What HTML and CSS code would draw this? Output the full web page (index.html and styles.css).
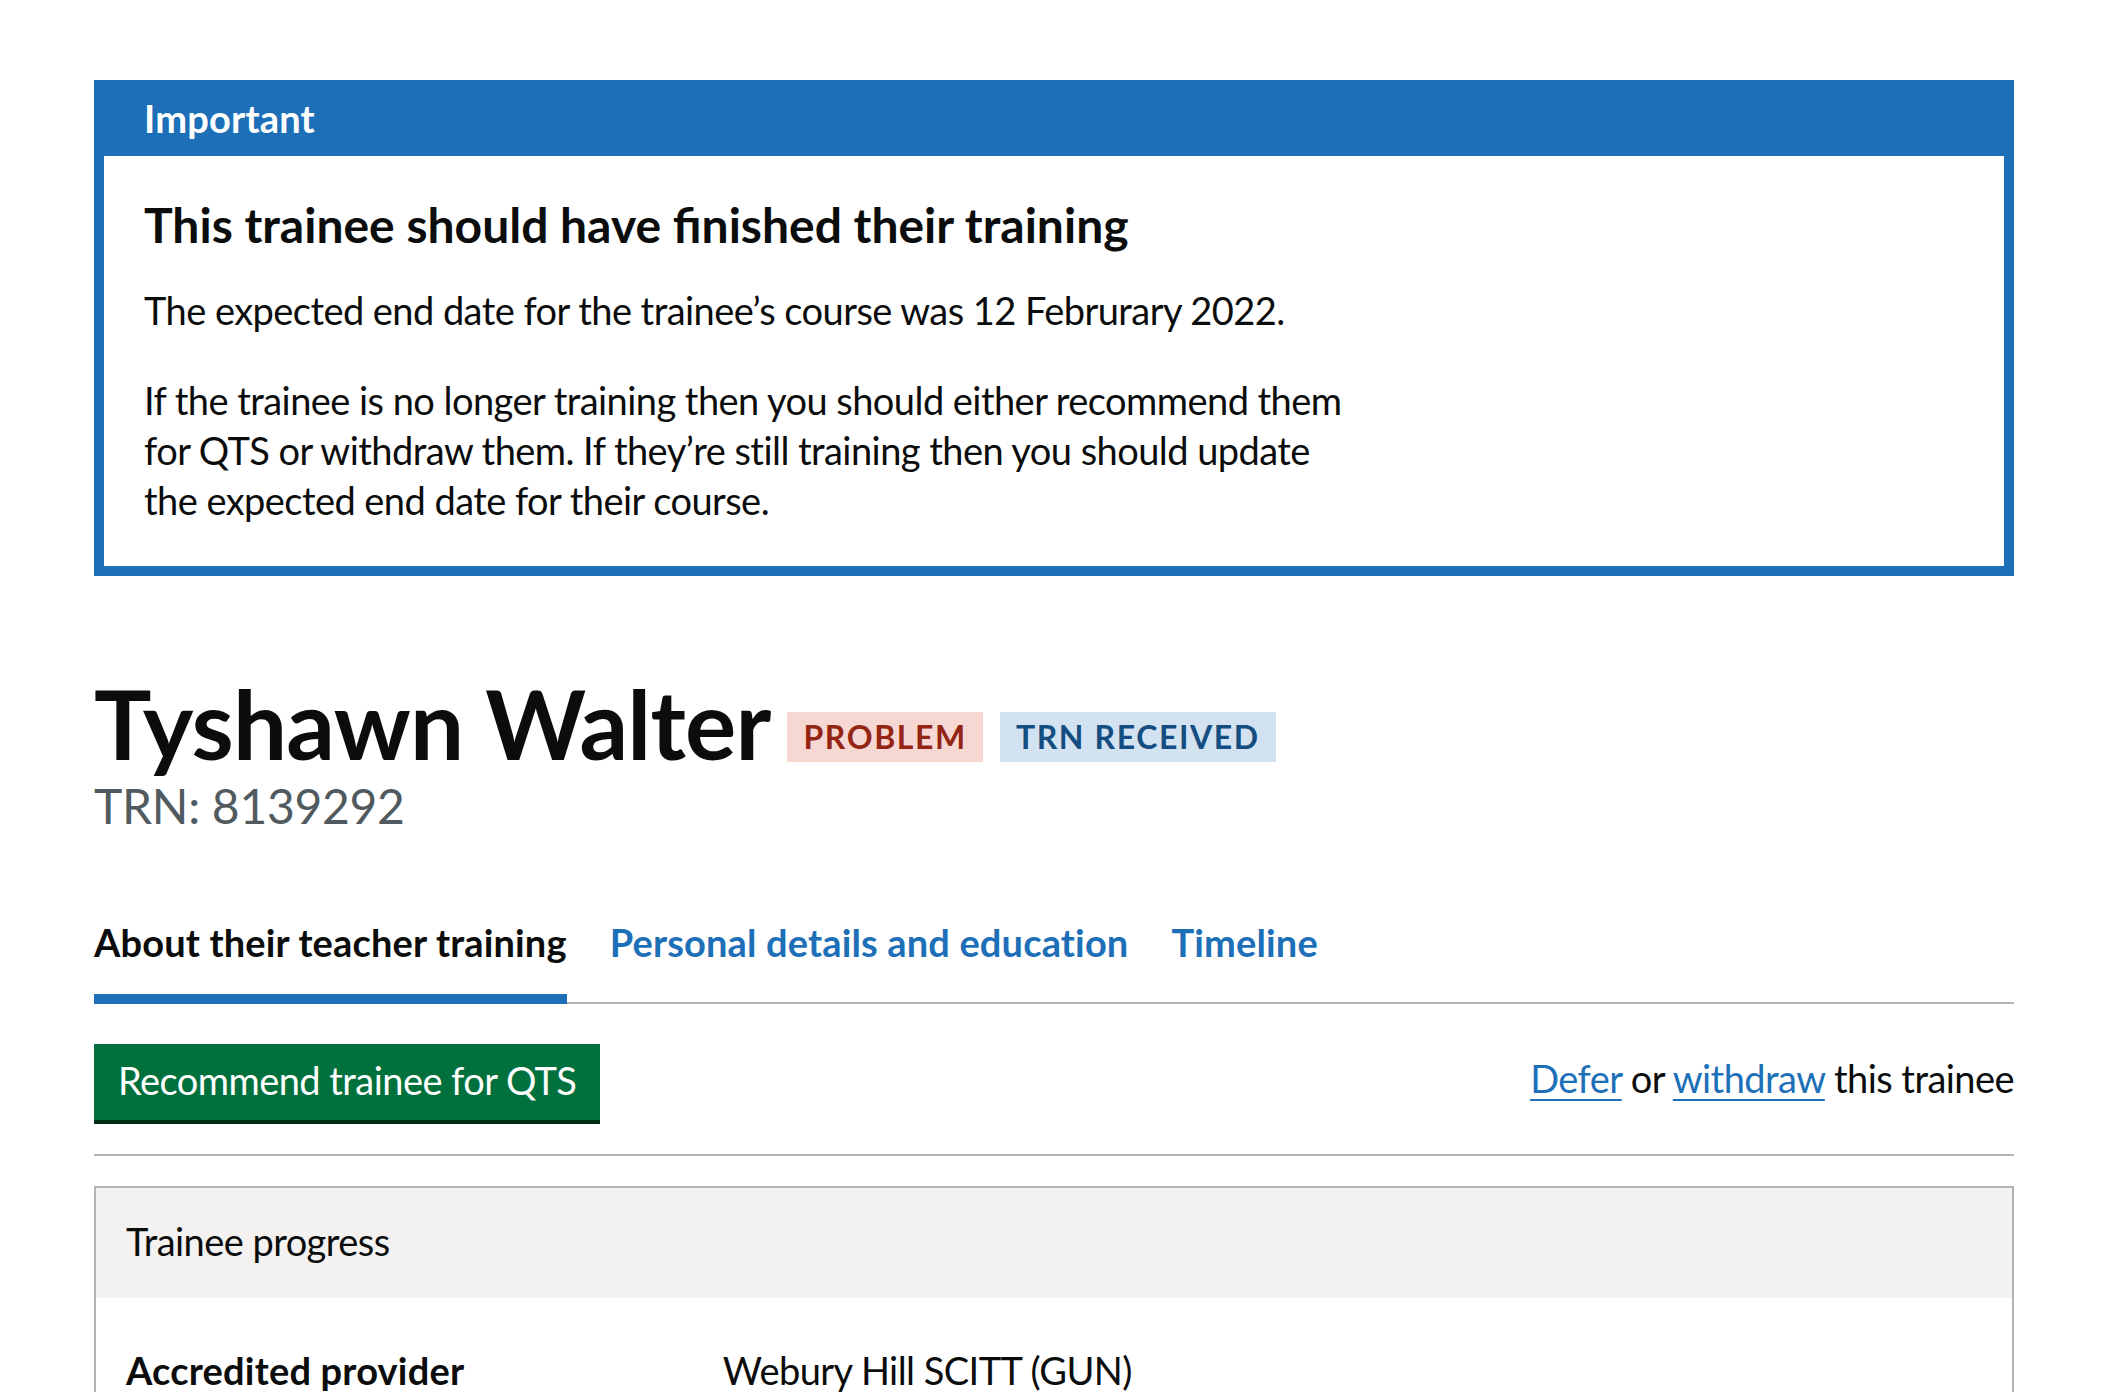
FILE: index.html
```html
<!DOCTYPE html>
<html lang="en">
<head>
<meta charset="utf-8">
<title>Tyshawn Walter - Register trainee teachers</title>
<link rel="stylesheet" href="styles.css">
</head>
<body>
<div class="page">
  <main class="container">
    <div class="banner" role="region" aria-labelledby="banner-title">
      <div class="banner-header">
        <h2 class="banner-title" id="banner-title">Important</h2>
      </div>
      <div class="banner-content">
        <h3 class="banner-heading">This trainee should have finished their training</h3>
        <p class="body-text">The expected end date for the trainee’s course was 12 Februrary 2022.</p>
        <p class="body-text">If the trainee is no longer training then you should either recommend them for QTS or withdraw them. If they’re still training then you should update the expected end date for their course.</p>
      </div>
    </div>

    <h1 class="name-heading">
      <span class="name">Tyshawn Walter</span>
      <strong class="tag tag-red">Problem</strong>
      <strong class="tag tag-blue">TRN received</strong>
    </h1>
    <p class="caption">TRN: 8139292</p>

    <nav class="tabs" aria-label="Trainee record">
      <ul class="tabs-list">
        <li class="tabs-item tabs-item-current"><a class="tabs-link tabs-link-current" href="#" aria-current="page">About their teacher training</a></li>
        <li class="tabs-item"><a class="tabs-link" href="#">Personal details and education</a></li>
        <li class="tabs-item"><a class="tabs-link" href="#">Timeline</a></li>
      </ul>
    </nav>

    <div class="record-actions">
      <a class="button" href="#" role="button">Recommend trainee for QTS</a>
      <p class="record-links"><a class="link" href="#">Defer</a> or <a class="link" href="#">withdraw</a> this trainee</p>
    </div>

    <section class="card">
      <div class="card-header">
        <h2 class="card-title">Trainee progress</h2>
      </div>
      <div class="card-content">
        <dl class="summary-list">
          <div class="summary-row">
            <dt class="summary-key">Accredited provider</dt>
            <dd class="summary-value">Webury Hill SCITT (GUN)</dd>
          </div>
        </dl>
      </div>
    </section>
  </main>
</div>
</body>
</html>
```
FILE: styles.css
```css
html, body {
  margin: 0;
  padding: 0;
  background: #ffffff;
}

body {
  font-family: Lato, "Liberation Sans", Arial, sans-serif;
  color: #0b0c0c;
  -webkit-font-smoothing: antialiased;
}

.page {
  padding: 80px 0 0 94px;
}

.container {
  width: 1920px;
}

/* Notification banner */
.banner {
  border: 10px solid #1d70b8;
  background: #1d70b8;
  margin-bottom: 97px;
}

.banner-header {
  padding: 3px 40px 11px;
  border-bottom: 2px solid transparent;
}

.banner-title {
  margin: 0;
  font-size: 38px;
  line-height: 50px;
  font-weight: 700;
  color: #ffffff;
  letter-spacing: 0.2px;
}

.banner-content {
  background: #ffffff;
  padding: 39px 40px 41px;
}

.banner-heading {
  margin: 0 0 30px;
  font-size: 48px;
  line-height: 60px;
  font-weight: 700;
  max-width: 1210px;
}

.body-text {
  margin: 0 0 40px;
  font-size: 38px;
  line-height: 50px;
  letter-spacing: -0.55px;
  max-width: 1210px;
}

.body-text:last-child {
  margin-bottom: 0;
}

/* Heading */
.name-heading {
  display: flex;
  align-items: flex-start;
  margin: 0 0 3px;
  font-size: 96px;
  line-height: 100px;
  font-weight: 700;
}

.name {
  letter-spacing: -0.8px;
  margin-right: 17px;
}

.tag {
  display: inline-block;
  margin-top: 39px;
  margin-right: 17px;
  padding: 9px 16px 9px;
  font-size: 32px;
  line-height: 32px;
  font-weight: 700;
  text-transform: uppercase;
  letter-spacing: 1.6px;
}

.tag-red {
  background: #f6d7d2;
  color: #942514;
}

.tag-blue {
  background: #d2e2f1;
  color: #144e81;
}

.caption {
  margin: 0 0 81px;
  font-size: 48px;
  line-height: 60px;
  color: #505a5f;
  letter-spacing: -0.3px;
}

/* Tabs */
.tabs-list {
  display: flex;
  margin: 0;
  padding: 0;
  list-style: none;
  border-bottom: 2px solid #b1b4b6;
}

.tabs-item {
  margin: 0 43px -2px 0;
  padding-bottom: 27px;
}

.tabs-item-current {
  border-bottom: 10px solid #1d70b8;
}

.tabs-link {
  display: block;
  font-size: 38px;
  line-height: 50px;
  font-weight: 700;
  letter-spacing: 0.15px;
  color: #1d70b8;
  text-decoration: none;
}

.tabs-link-current {
  color: #0b0c0c;
}

/* Actions row */
.record-actions {
  display: flex;
  justify-content: space-between;
  align-items: center;
  margin-top: 40px;
  padding-bottom: 34px;
  border-bottom: 2px solid #b1b4b6;
}

.button {
  display: inline-block;
  padding: 13px 20px 17px;
  border: 4px solid transparent;
  background: #00703c;
  box-shadow: 0 4px 0 #002d18;
  color: #ffffff;
  font-size: 38px;
  line-height: 38px;
  letter-spacing: -0.55px;
  text-decoration: none;
}

.record-links {
  margin: 0 0 8px;
  font-size: 38px;
  line-height: 50px;
  letter-spacing: -0.55px;
}

.link {
  color: #1d70b8;
  text-decoration: underline;
  text-decoration-thickness: 2px;
  text-underline-offset: 6px;
}

/* Summary card */
.card {
  margin-top: 30px;
  border: 2px solid #b1b4b6;
}

.card-header {
  background: #f3f2f1;
  padding: 28px 30px 32px;
}

.card-title {
  margin: 0;
  font-size: 38px;
  line-height: 50px;
  font-weight: 400;
  letter-spacing: -0.55px;
}

.card-content {
  padding: 27px 30px 30px;
}

.summary-list {
  margin: 0;
}

.summary-row {
  display: grid;
  grid-template-columns: calc(30% + 40px) 1fr;
  border-bottom: 2px solid #b1b4b6;
}

.summary-key {
  padding: 20px 40px 20px 0;
  font-size: 38px;
  line-height: 50px;
  font-weight: 700;
  letter-spacing: 0.2px;
}

.summary-value {
  margin: 0;
  padding: 20px 0;
  font-size: 38px;
  line-height: 50px;
  letter-spacing: -0.55px;
}
```
